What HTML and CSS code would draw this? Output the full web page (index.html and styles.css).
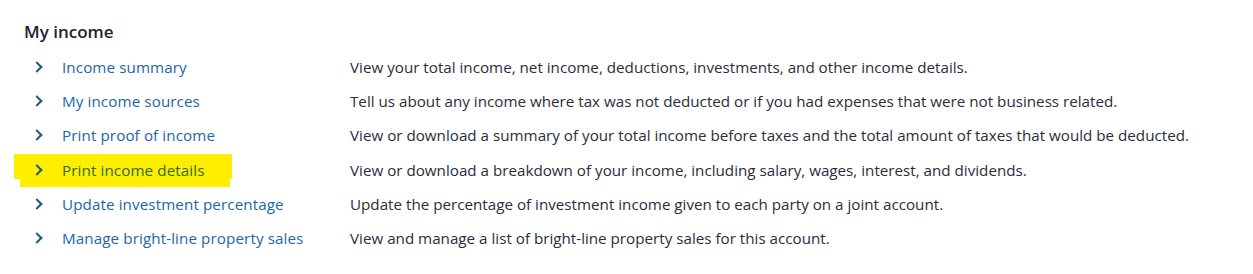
FILE: index.html
```html
<!DOCTYPE html>
<html>
<head>
<meta charset="utf-8">
<link rel="stylesheet" href="styles.css">
</head>
<body>
<section class="panel">
  <h2 class="title">My income</h2>
  <ul class="list">
    <li class="row"><span class="chev"></span><a class="link" href="#">Income summary</a><span class="desc">View your total income, net income, deductions, investments, and other income details.</span></li>
    <li class="row"><span class="chev"></span><a class="link" href="#">My income sources</a><span class="desc">Tell us about any income where tax was not deducted or if you had expenses that were not business related.</span></li>
    <li class="row"><span class="chev"></span><a class="link" href="#">Print proof of income</a><span class="desc">View or download a summary of your total income before taxes and the total amount of taxes that would be deducted.</span></li>
    <li class="row marked"><span class="mark"><span class="mark-top"></span><span class="mark-bottom"></span></span><span class="chev"></span><a class="link" href="#">Print income details</a><span class="desc">View or download a breakdown of your income, including salary, wages, interest, and dividends.</span></li>
    <li class="row"><span class="chev"></span><a class="link" href="#">Update investment percentage</a><span class="desc">Update the percentage of investment income given to each party on a joint account.</span></li>
    <li class="row"><span class="chev"></span><a class="link" href="#">Manage bright-line property sales</a><span class="desc">View and manage a list of bright-line property sales for this account.</span></li>
  </ul>
</section>
</body>
</html>
```
FILE: styles.css
```css
html, body {
  margin: 0;
  padding: 0;
  background: #ffffff;
}
body {
  font-family: "Open Sans", "Noto Sans", "Liberation Sans", sans-serif;
  color: #2b2d3a;
}
.panel {
  padding: 20px 0 0 24px;
}
.title {
  margin: 0 0 6px 0;
  font-size: 17px;
  font-weight: 600;
  line-height: 24px;
  color: #1f2230;
}
.list {
  list-style: none;
  margin: 0;
  padding: 0;
}
.row {
  position: relative;
  display: flex;
  align-items: center;
  height: 34.2px;
  font-size: 15.2px;
}
.chev {
  width: 6px;
  height: 6px;
  border-right: 2px solid #1e5c78;
  border-top: 2px solid #1e5c78;
  transform: rotate(45deg);
  margin-left: 9px;
  margin-right: 21px;
  position: relative;
  z-index: 1;
}
.link {
  width: 288px;
  color: #2366a8;
  text-decoration: none;
  position: relative;
  z-index: 1;
  letter-spacing: 0.1px;
}
.desc {
  white-space: nowrap;
}
.marked .link {
  color: #2f6a2a;
}
.mark {
  position: absolute;
  left: -10px;
  top: 1px;
  width: 220px;
  height: 34px;
  z-index: 0;
}
.mark-top {
  position: absolute;
  left: 0;
  top: 0;
  width: 218px;
  height: 25px;
  background: #ffee00;
}
.mark-bottom {
  position: absolute;
  left: 6px;
  top: 24px;
  width: 210px;
  height: 9px;
  background: #ffee00;
}
```
